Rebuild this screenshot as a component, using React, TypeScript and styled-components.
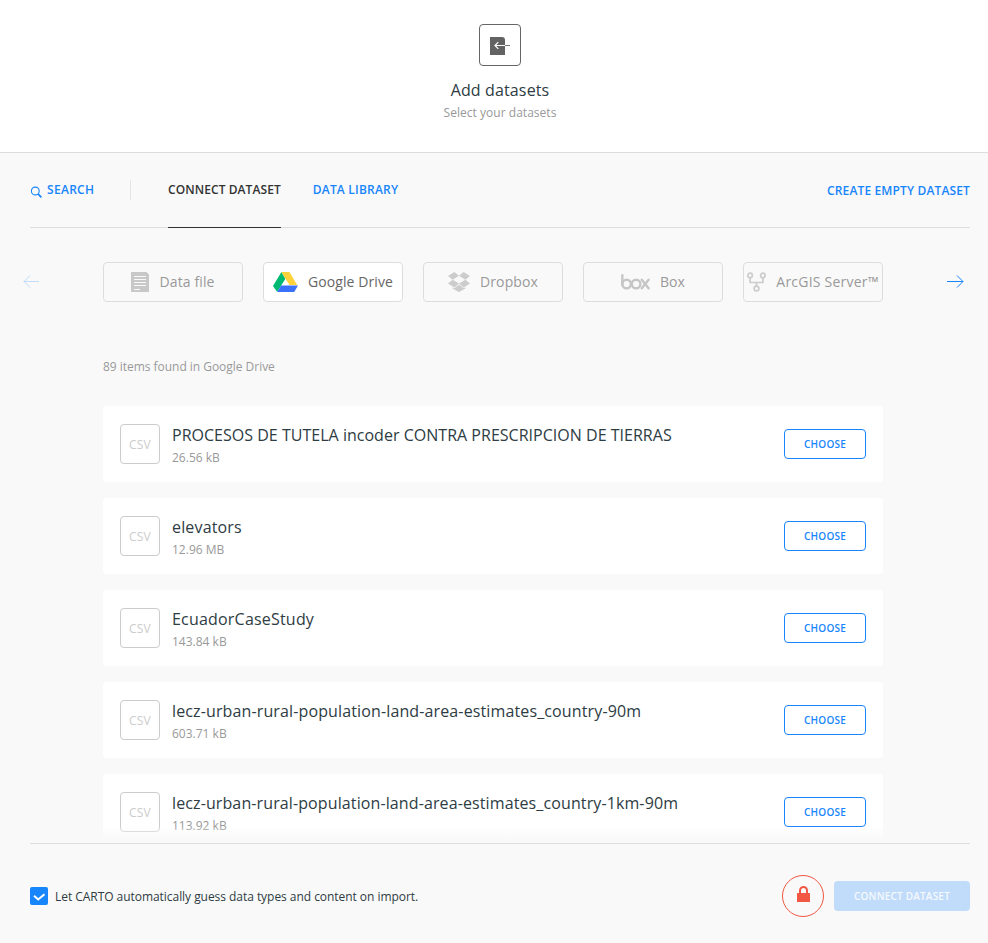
import React from "react";
import styled, { createGlobalStyle, css } from "styled-components";

const GlobalStyle = createGlobalStyle`
  * { box-sizing: border-box; }
  body { margin: 0; background: #f9f9f9; }
  button { font: inherit; margin: 0; padding: 0; background: none; border: 0; cursor: pointer; }
  svg { display: block; flex: none; }
`;

const Page = styled.div`
  width: 988px;
  height: 943px;
  overflow: hidden;
  display: flex;
  flex-direction: column;
  background: #f9f9f9;
  color: #2e3c43;
  font-family: "Open Sans", sans-serif;
`;

const Header = styled.header`
  height: 153px;
  flex: none;
  padding: 24px 0 0 12px;
  display: flex;
  flex-direction: column;
  align-items: center;
  background: #fff;
  border-bottom: 1px solid #ddd;
`;

const HeaderIcon = styled.div`
  width: 42px;
  height: 42px;
  display: flex;
  align-items: center;
  justify-content: center;
  padding-top: 2px;
  border: 1px solid #666;
  border-radius: 4px;
`;

const Title = styled.h1`
  margin: 13px 0 0;
  font-size: 16px;
  line-height: 22px;
  font-weight: 400;
  letter-spacing: 0.14px;
`;

const Subtitle = styled.p`
  margin: 3px 0 0;
  font-size: 12px;
  line-height: 17px;
  letter-spacing: 0.03px;
  color: #999;
`;

const Nav = styled.nav`
  flex: none;
  height: 75px;
  margin: 0 18px 0 30px;
  display: flex;
  border-bottom: 1px solid #ddd;
  font-size: 12px;
  line-height: 16px;
  font-weight: 600;
`;

const SearchButton = styled.button`
  width: 101px;
  height: 20px;
  margin: 27px 37px 0 0;
  display: flex;
  align-items: center;
  gap: 5px;
  border-right: 1px solid #e5e5e5;
  color: #1785fb;
  line-height: 16px;
  letter-spacing: 0.3px;
  padding-bottom: 1px;

  svg { margin-top: 4px; }
`;

const Tab = styled.button<{ $active?: boolean; $tracking: number }>`
  height: 75px;
  margin-right: 32px;
  padding-bottom: 1px;
  letter-spacing: ${({ $tracking }) => $tracking}px;
  color: ${({ $active }) => ($active ? "#333" : "#1785fb")};
  border-bottom: 1px solid ${({ $active }) => ($active ? "#333" : "transparent")};
`;

const CreateEmpty = styled.button`
  height: 75px;
  margin-left: auto;
  letter-spacing: 0.14px;
  color: #1785fb;
`;

const Carousel = styled.div`
  flex: none;
  height: 40px;
  margin: 34px 24px 0 23px;
  display: flex;
  align-items: center;
  justify-content: space-between;
`;

const Services = styled.div`
  display: flex;
  gap: 20px;
  margin-right: auto;
  margin-left: 63px;
`;

const ArrowButton = styled.button<{ $disabled?: boolean }>`
  color: #1785fb;
  opacity: ${({ $disabled }) => ($disabled ? 0.24 : 1)};
`;

const Service = styled.button<{ $selected?: boolean; $tracking: number }>`
  width: 140px;
  height: 40px;
  display: flex;
  align-items: center;
  justify-content: center;
  gap: 10px;
  border: 1px solid #ddd;
  border-radius: 4px;
  font-size: 14px;
  line-height: 20px;
  letter-spacing: ${({ $tracking }) => $tracking}px;
  white-space: nowrap;
  color: #999;
  ${({ $selected }) =>
    $selected &&
    css`
      background: #fff;
      color: #666;
    `}
`;

const Summary = styled.p`
  flex: none;
  margin: 56px 0 31px 103px;
  font-size: 12px;
  line-height: 17px;
  letter-spacing: -0.03px;
  color: #999;
`;

const List = styled.ul`
  position: relative;
  flex: none;
  width: 988px;
  height: 437px;
  margin: 0;
  padding: 0 105px 0 103px;
  overflow: hidden;
  display: flex;
  flex-direction: column;
  gap: 16px;
  list-style: none;

  &::after {
    content: "";
    position: absolute;
    left: 0;
    right: 0;
    bottom: 0;
    height: 17px;
    background: linear-gradient(rgba(249, 249, 249, 0), #f9f9f9 85%);
  }
`;

const Row = styled.li`
  flex: none;
  height: 76px;
  padding: 0 17px;
  display: flex;
  align-items: center;
  background: #fff;
  border-radius: 4px;
`;

const FileType = styled.span`
  width: 40px;
  height: 40px;
  margin-right: 12px;
  padding-top: 2px;
  display: flex;
  align-items: center;
  justify-content: center;
  border: 1px solid #ccc;
  border-radius: 4px;
  font-size: 12px;
  line-height: 16px;
  letter-spacing: 0.2px;
  color: #ccc;
`;

const FileInfo = styled.div`
  flex: 1;
  padding-top: 2px;
`;

const FileName = styled.h2<{ $tracking: number }>`
  margin: 0;
  font-size: 16px;
  line-height: 22px;
  font-weight: 400;
  letter-spacing: ${({ $tracking }) => $tracking}px;
`;

const FileSize = styled.p`
  margin: 3px 0 0;
  font-size: 12px;
  line-height: 17px;
  color: #999;
`;

const Choose = styled.button`
  width: 82px;
  height: 30px;
  border: 1px solid #1785fb;
  border-radius: 4px;
  font-size: 10px;
  line-height: 14px;
  font-weight: 600;
  letter-spacing: 0.25px;
  color: #1785fb;
`;

const Footer = styled.footer`
  flex: 1;
  margin: 0 18px 0 30px;
  padding-top: 4px;
  border-top: 1px solid #ddd;
  display: flex;
  align-items: center;
`;

const GuessLabel = styled.label`
  display: flex;
  align-items: center;
  gap: 7px;
  font-size: 12px;
  line-height: 17px;
  letter-spacing: -0.045px;
`;

const GuessText = styled.span`
  padding-top: 2px;
`;

const Checkbox = styled.span`
  width: 18px;
  height: 18px;
  background: #1785fb;
  border-radius: 2px;
`;

const Lock = styled.div`
  width: 42px;
  height: 42px;
  margin: 0 10px 0 auto;
  display: flex;
  justify-content: center;
  padding-top: 10px;
  border: 1px solid #f15743;
  border-radius: 50%;
`;

const Submit = styled.button`
  width: 136px;
  height: 30px;
  border-radius: 4px;
  background: #c1dcfa;
  color: #f5f9fe;
  font-size: 10px;
  line-height: 14px;
  font-weight: 600;
  letter-spacing: 0.2px;
`;

const ImportIcon = () => (
  <svg width="20" height="18" viewBox="0 0 20 18">
    <path d="M0 0h12q3 0 3 3v15H0z" fill="#636363" />
    <path d="M5 8.5h10M8.3 5.2 5 8.5l3.3 3.3" fill="none" stroke="#fff" strokeWidth="1.2" />
    <path d="M15 8.5h5" stroke="#777" strokeWidth="1" />
  </svg>
);

const SearchIcon = () => (
  <svg width="12" height="12" viewBox="0 0 12 12" fill="none" stroke="#1785fb">
    <circle cx="5.3" cy="5" r="3.9" strokeWidth="1.1" />
    <path d="m8 7.8 3.4 3.5" strokeWidth="1.7" />
  </svg>
);

const ArrowIcon = ({ left = false }: { left?: boolean }) => (
  <svg width="17" height="14" viewBox="0 0 17 14" fill="none" stroke="currentColor">
    <path d={left ? "M.7 6.5H16M7 .5l-6 6 6 6" : "M0 6.5h16M10 .5l6 6-6 6"} />
  </svg>
);

const FileIcon = () => (
  <svg width="18" height="20" viewBox="0 0 18 20">
    <path d="M0 0h15.5L18 2.5V20H0z" fill="#c8c8c8" />
    <path d="M3 4.5h12M3 7.5h12M3 10.5h12M3 13.5h12M3 17.5h6" stroke="#f9f9f9" />
  </svg>
);

const DriveIcon = () => (
  <svg width="25" height="20" viewBox="0 0 25 20">
    <path d="M8.4 0 0 14l4.2 6 8.2-13.3z" fill="#00b972" />
    <path d="M8.4 0h8L24.2 13H16.4z" fill="#ffd23b" />
    <path d="M8.1 13.4H25L21.2 20h-17z" fill="#3971fb" />
  </svg>
);

const DropboxIcon = () => (
  <svg width="22" height="20" viewBox="0 0 22 20" fill="#ccc">
    <path d="M6.4 0 11 3.8 4.7 7.7 0 4zM15.6 0 22 4l-4.7 3.7L11 3.8zM0 11.4l4.7-3.7 6.3 3.9-4.6 3.8zM17.3 7.7l4.7 3.7-6.4 4-4.6-3.8z" />
    <path d="m11 12.4 4.6 3.9 1.8-1.1v1.2L11 20l-6.4-3.6v-1.2l1.8 1.1z" />
  </svg>
);

const BoxIcon = () => (
  <svg width="29" height="16" viewBox="0 0 29 16" fill="none" stroke="#c6c6c6" strokeWidth="2.4" strokeLinecap="round">
    <path d="M1.3 1.3v9" />
    <circle cx="5.6" cy="10" r="4.3" />
    <circle cx="15.1" cy="10" r="4.3" />
    <path d="m20.8 5.8 6.8 8.5M27.6 5.8l-6.8 8.5" />
  </svg>
);

const ServerIcon = () => (
  <svg width="19" height="20" viewBox="0 0 19 20" fill="none" stroke="#ccc" strokeWidth="1.7">
    <circle cx="3.1" cy="3.5" r="2.3" />
    <circle cx="15.9" cy="3.5" r="2.3" />
    <circle cx="9.5" cy="16.5" r="2.4" />
    <path d="M3.1 5.9v4.6h12.8V5.9M9.5 10.5v3.6" />
  </svg>
);

const CheckIcon = () => (
  <svg width="18" height="18" viewBox="0 0 18 18">
    <path d="m4 8.8 4.2 3.7 6.3-5.2" fill="none" stroke="#fff" strokeWidth="2" />
  </svg>
);

const LockIcon = () => (
  <svg width="13" height="17" viewBox="0 0 13 17">
    <path d="M3 8V4.5a3.5 3.5 0 0 1 7 0V8" fill="none" stroke="#f15743" strokeWidth="2" />
    <rect y="7" width="13" height="9" rx=".5" fill="#f15743" />
  </svg>
);

const services = [
  { name: "Data file", icon: <FileIcon />, tracking: 0.12 },
  { name: "Google Drive", icon: <DriveIcon />, tracking: 0.1, selected: true },
  { name: "Dropbox", icon: <DropboxIcon />, tracking: 0.12 },
  { name: "Box", icon: <BoxIcon />, tracking: 0.1 },
  { name: "ArcGIS Server™", icon: <ServerIcon />, tracking: 0.22 },
];

const files = [
  { name: "PROCESOS DE TUTELA incoder CONTRA PRESCRIPCION DE TIERRAS", size: "26.56 kB", tracking: 0.02 },
  { name: "elevators", size: "12.96 MB", tracking: 0.16 },
  { name: "EcuadorCaseStudy", size: "143.84 kB", tracking: 0.2 },
  { name: "lecz-urban-rural-population-land-area-estimates_country-90m", size: "603.71 kB", tracking: 0.13 },
  { name: "lecz-urban-rural-population-land-area-estimates_country-1km-90m", size: "113.92 kB", tracking: 0.112 },
];

export default function App() {
  return (
    <Page>
      <GlobalStyle />
      <Header>
        <HeaderIcon><ImportIcon /></HeaderIcon>
        <Title>Add datasets</Title>
        <Subtitle>Select your datasets</Subtitle>
      </Header>
      <Nav>
        <SearchButton><SearchIcon />SEARCH</SearchButton>
        <Tab $active $tracking={0.08}>CONNECT DATASET</Tab>
        <Tab $tracking={0.2}>DATA LIBRARY</Tab>
        <CreateEmpty>CREATE EMPTY DATASET</CreateEmpty>
      </Nav>
      <Carousel>
        <ArrowButton $disabled aria-label="Previous"><ArrowIcon left /></ArrowButton>
        <Services>
          {services.map((s) => (
            <Service key={s.name} $selected={s.selected} $tracking={s.tracking}>
              {s.icon}
              {s.name}
            </Service>
          ))}
        </Services>
        <ArrowButton aria-label="Next"><ArrowIcon /></ArrowButton>
      </Carousel>
      <Summary>89 items found in Google Drive</Summary>
      <List>
        {files.map(({ name, size, tracking }) => (
          <Row key={name}>
            <FileType>CSV</FileType>
            <FileInfo>
              <FileName $tracking={tracking}>{name}</FileName>
              <FileSize>{size}</FileSize>
            </FileInfo>
            <Choose>CHOOSE</Choose>
          </Row>
        ))}
      </List>
      <Footer>
        <GuessLabel>
          <Checkbox><CheckIcon /></Checkbox>
          <GuessText>Let CARTO automatically guess data types and content on import.</GuessText>
        </GuessLabel>
        <Lock><LockIcon /></Lock>
        <Submit>CONNECT DATASET</Submit>
      </Footer>
    </Page>
  );
}
